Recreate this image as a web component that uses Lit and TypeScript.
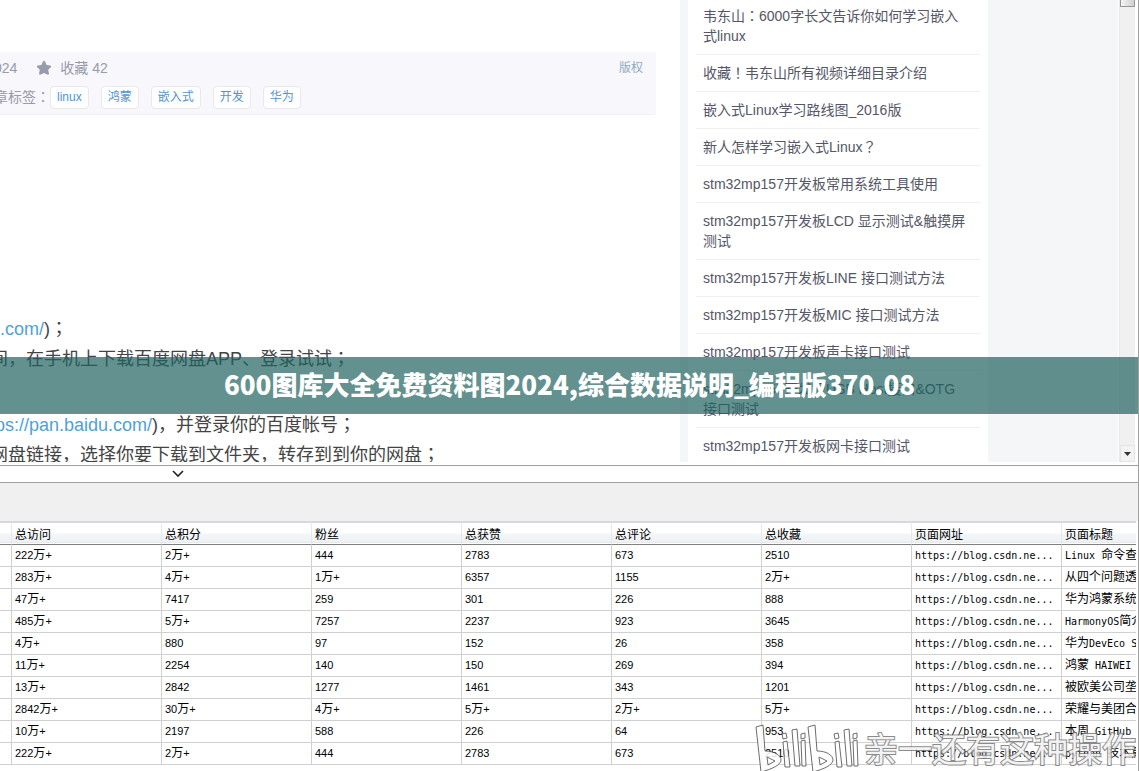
import { LitElement, html, css, svg } from "lit";
import { customElement } from "lit/decorators.js";

const TAGS = ["linux", "鸿蒙", "嵌入式", "开发", "华为"];

const POSTS = [
  "韦东山：6000字长文告诉你如何学习嵌入式linux",
  "收藏！韦东山所有视频详细目录介绍",
  "嵌入式Linux学习路线图_2016版",
  "新人怎样学习嵌入式Linux？",
  "stm32mp157开发板常用系统工具使用",
  "stm32mp157开发板LCD 显示测试&触摸屏测试",
  "stm32mp157开发板LINE 接口测试方法",
  "stm32mp157开发板MIC 接口测试方法",
  "stm32mp157开发板声卡接口测试",
  "stm32mp157开发板USB Host接口&OTG 接口测试",
  "stm32mp157开发板网卡接口测试",
];

const HEADERS = ["总访问", "总积分", "粉丝", "总获赞", "总评论", "总收藏", "页面网址", "页面标题"];
const URL_TEXT = "https://blog.csdn.ne...";

const ROWS: string[][] = [
  ["222万+", "2万+", "444", "2783", "673", "2510", URL_TEXT, "Linux 命令查询"],
  ["283万+", "4万+", "1万+", "6357", "1155", "2万+", URL_TEXT, "从四个问题透析"],
  ["47万+", "7417", "259", "301", "226", "888", URL_TEXT, "华为鸿蒙系统的"],
  ["485万+", "5万+", "7257", "2237", "923", "3645", URL_TEXT, "HarmonyOS简介"],
  ["4万+", "880", "97", "152", "26", "358", URL_TEXT, "华为DevEco Studio"],
  ["11万+", "2254", "140", "150", "269", "394", URL_TEXT, "鸿蒙 HAIWEI 开发"],
  ["13万+", "2842", "1277", "1461", "343", "1201", URL_TEXT, "被欧美公司垄断"],
  ["2842万+", "30万+", "4万+", "5万+", "2万+", "5万+", URL_TEXT, "荣耀与美团合作"],
  ["10万+", "2197", "588", "226", "64", "953", URL_TEXT, "本周 GitHub 速览"],
  ["222万+", "2万+", "444", "2783", "673", "2510", URL_TEXT, "python 技术篇"],
];

/* Numbers and Latin runs are set in half-width faces, CJK runs in a full-width one. */
const mixed = (text: string) =>
  (text.match(/[\x20-\x7e]+|[^\x20-\x7e]+/g) ?? []).map((run) => {
    if (run.charCodeAt(0) > 126) return run;
    return html`<span class=${/^[\d+]+$/.test(run) ? "num" : "latin"}>${run}</span>`;
  });

/* Full-width colons and marks sit in the middle of their cell. */
const centred = (text: string) =>
  text
    .split(/([；：！？])/)
    .filter((s) => s)
    .map((s) => (/^[；：！？]$/.test(s) ? html`<span class="punct" lang="zh-Hant">${s}</span>` : s));

const punctStyle = css`
  .punct { font-family: "Noto Sans CJK TC", sans-serif; line-height: 1; }
`;

@customElement("post-article")
class PostArticle extends LitElement {
  static styles = [punctStyle, css`
    :host {
      display: block;
      overflow: hidden;
      background: #fff;
      font-family: "Liberation Sans", "Noto Sans CJK SC", sans-serif;
    }
    .article { margin-left: -10px; padding-top: 52px; }
    .meta {
      margin-right: 24px;
      padding: 4px 13px 0 4px;
      background: #f7f7fc;
      border-bottom: 1px solid #f0f0f5;
      border-radius: 3px;
      color: #999aaa;
      font-size: 14px;
    }
    .row { display: flex; align-items: center; height: 24px; line-height: 20px; }
    .row.tags { height: 34px; }
    .star { width: 16px; height: 16px; margin: 0 8px 0 19px; fill: #999aaa; }
    .rights { margin-left: auto; font-size: 12px; color: #8fa9c6; text-decoration: none; }
    .tags-list { display: flex; gap: 12px; }
    .tag {
      box-sizing: border-box;
      height: 23px;
      padding: 0 6px;
      border: 1px solid #e8e8ed;
      border-radius: 4px;
      background: #fff;
      color: #5094d5;
      font-size: 12px;
      line-height: 21px;
      text-decoration: none;
      white-space: nowrap;
    }
    .body { padding-top: 199px; font-size: 18px; line-height: 30px; color: #444; white-space: nowrap; }
    .body p { margin: 0; }
    .body p.section { margin-top: 36px; }
    .body a { color: #4ea1db; text-decoration: none; }
  `];
  render() {
    return html`
      <article class="article">
        <header class="meta">
          <div class="row">
            <span>024</span>
            <svg class="star" viewBox="0 0 16 16" aria-hidden="true">
              <path d="M8 .8c.5 0 .8.3 1 .8l1.6 3.3 3.6.5c1 .2 1.300 1.100.6 1.800l-2.600 2.500.7 3.700c.1 1-.7 1.600-1.600 1.200L8 12.900l-3.300 1.700c-.9.4-1.700-.2-1.600-1.200l.7-3.700L1.200 7.200C.5 6.500.8 5.600 1.800 5.400l3.600-.5L7 1.600c.2-.5.5-.8 1-.8z" />
            </svg>
            <span>收藏 42</span>
            <a class="rights" href="#">版权</a>
          </div>
          <div class="row tags">
            <span>${centred("章标签：")}</span>
            <div class="tags-list">${TAGS.map((t) => html`<a class="tag" href="#">${t}</a>`)}</div>
          </div>
        </header>
        <div class="body">
          <p><a href="#">u.com/</a>)${centred("；")}</p>
          <p>${centred("间，在手机上下载百度网盘APP、登录试试；")}</p>
          <p class="section"><a href="#">tps://pan.baidu.com/</a>${centred(")，并登录你的百度帐号；")}</p>
          <p>${centred("网盘链接，选择你要下载到文件夹，转存到到你的网盘；")}</p>
        </div>
      </article>
    `;
  }
}

@customElement("post-sidebar")
class PostSidebar extends LitElement {
  static styles = [punctStyle, css`
    :host {
      display: block;
      overflow: hidden;
      background: #f5f6f8;
      font-family: "Liberation Sans", "Noto Sans CJK SC", sans-serif;
    }
    .card { width: 284px; margin: -2px 0 0 8px; padding: 0 8px; background: #fff; }
    .list { margin: 0; padding: 0; list-style: none; }
    .list li { padding: 8px 10px 8px 7px; border-bottom: 1px solid #f0f0f2; line-height: 20px; }
    .list a { display: block; font-size: 14px; color: #555666; text-decoration: none; }
  `];
  render() {
    return html`
      <nav class="card">
        <ul class="list">${POSTS.map((p) => html`<li><a href="#">${centred(p)}</a></li>`)}</ul>
      </nav>
    `;
  }
}

@customElement("stats-table")
class StatsTable extends LitElement {
  static styles = css`
    :host {
      display: block;
      overflow: hidden;
      margin-right: 2px;
      font-family: "Noto Sans CJK SC", sans-serif;
      font-size: 12px;
      color: #000;
    }
    table { width: 1212px; table-layout: fixed; border-collapse: separate; border-spacing: 0; }
    .lead { width: 12px; }
    th, td {
      box-sizing: border-box;
      height: 22px;
      padding: 0 3px;
      border-right: 1px solid #d0d0d0;
      border-bottom: 1px solid #d0d0d0;
      font-weight: 400;
      line-height: 18px;
      text-align: left;
      white-space: nowrap;
      overflow: hidden;
    }
    td { padding-bottom: 3px; }
    th {
      height: 24px;
      border-top: 2px solid #d4d7e1;
      border-right-color: #e4e7ec;
      border-bottom-color: #808080;
      background: linear-gradient(#fff 45%, #f3f6f9 55%, #eff2f4 88%, #d5d5d5 90%, #fff 96%);
    }
    .latin, .num { line-height: 1; }
    .latin { font-family: "DejaVu Sans Mono", monospace; font-size: 10px; }
    .num { font-family: "Liberation Sans", sans-serif; font-size: 11px; }
  `;
  render() {
    return html`
      <table>
        <thead>
          <tr><th class="lead"></th>${HEADERS.map((h) => html`<th>${h}</th>`)}</tr>
        </thead>
        <tbody>
          ${ROWS.map((r) => html`<tr><td></td>${r.map((c) => html`<td>${mixed(c)}</td>`)}</tr>`)}
        </tbody>
      </table>
    `;
  }
}

@customElement("video-watermark")
class VideoWatermark extends LitElement {
  static styles = css`
    :host { display: flex; align-items: center; gap: 2px; opacity: 0.85; }
    .logo { width: 108px; height: 50px; fill: #fff; stroke: #555; stroke-width: 1; }
    .name {
      font: 34px/50px "Noto Sans CJK SC", sans-serif;
      color: #f2f2f2;
      -webkit-text-stroke: 2px #777;
      paint-order: stroke fill;
      white-space: nowrap;
    }
  `;
  private part(x: number) {
    return svg`<g transform="translate(${x} 0)">
      <path fill-rule="evenodd" d="M2 4 9 2l2 26c9 0 16 4 16 9S18 46 7 49zM13 34l1 8 7-4z" />
      <path d="m29 19 4-1 3 26h-5zM28 11l4-1 1 5-4 1zM38 7l5-1 3 37h-5zM47 18l4-1 1 26h-4zM47 11l4-1v5l-4 1z" />
    </g>`;
  }
  render() {
    return html`
      <svg class="logo" viewBox="0 0 108 50" role="img" aria-label="bilibili">
        ${this.part(0)}${this.part(52)}
      </svg>
      <span class="name">亲一还有这种操作</span>
    `;
  }
}

@customElement("app-root")
class AppRoot extends LitElement {
  static styles = css`
    :host {
      display: block;
      position: relative;
      box-sizing: border-box;
      min-height: 100vh;
      overflow: hidden;
      background: #fff;
      border-right: 1px solid #a0a0a0;
    }
    .browser {
      display: grid;
      grid-template-columns: minmax(0, 1fr) 438px 17px;
      height: 462px;
      margin: 0 3px 3px 0;
    }
    .scrollbar {
      display: flex;
      flex-direction: column;
      justify-content: space-between;
      box-sizing: border-box;
      margin-left: 1px;
      background: #f0f0f0;
      border-left: 1px solid #e8e8e8;
    }
    .thumb { height: 6px; border: 1px solid #979797; border-top: 0; background: linear-gradient(90deg, #f4f4f4, #d0d0d0); }
    .down { height: 17px; padding: 0; border: 1px solid #e4e4e4; background: #f3f3f3; line-height: 0; }
    .down svg { width: 7px; height: 4px; fill: #333; }
    .splitter {
      box-sizing: border-box;
      height: 18px;
      padding-left: 172px;
      border: solid #a0a0a0;
      border-width: 1px 0;
    }
    .collapse { display: block; padding: 4px 0 0; border: 0; background: none; line-height: 0; }
    .collapse svg { width: 12px; height: 8px; fill: none; stroke: #222; stroke-width: 1.6; }
    .toolbar { height: 38px; background: #f0f0f0; }
    .banner {
      position: absolute;
      top: 357px;
      left: 0;
      right: -1px;
      margin: 0;
      padding-bottom: 4px;
      background: rgba(32, 99, 95, 0.7);
      color: #fff;
      font: 900 26px/53px "Noto Sans CJK SC", sans-serif;
      text-align: center;
    }
    .mark { position: absolute; right: 2px; top: 723px; }
  `;
  render() {
    return html`
      <main class="browser">
        <post-article></post-article>
        <post-sidebar></post-sidebar>
        <div class="scrollbar">
          <div class="thumb"></div>
          <button class="down" aria-label="向下滚动">
            <svg viewBox="0 0 7 4"><path d="M0 0h7L3.500 4z" /></svg>
          </button>
        </div>
      </main>
      <div class="splitter">
        <button class="collapse" aria-label="折叠">
          <svg viewBox="0 0 12 8"><path d="m1 1 5 5 5-5" /></svg>
        </button>
      </div>
      <div class="toolbar"></div>
      <stats-table></stats-table>
      <h1 class="banner">600图库大全免费资料图2024,综合数据说明_编程版370.08</h1>
      <video-watermark class="mark"></video-watermark>
    `;
  }
}
